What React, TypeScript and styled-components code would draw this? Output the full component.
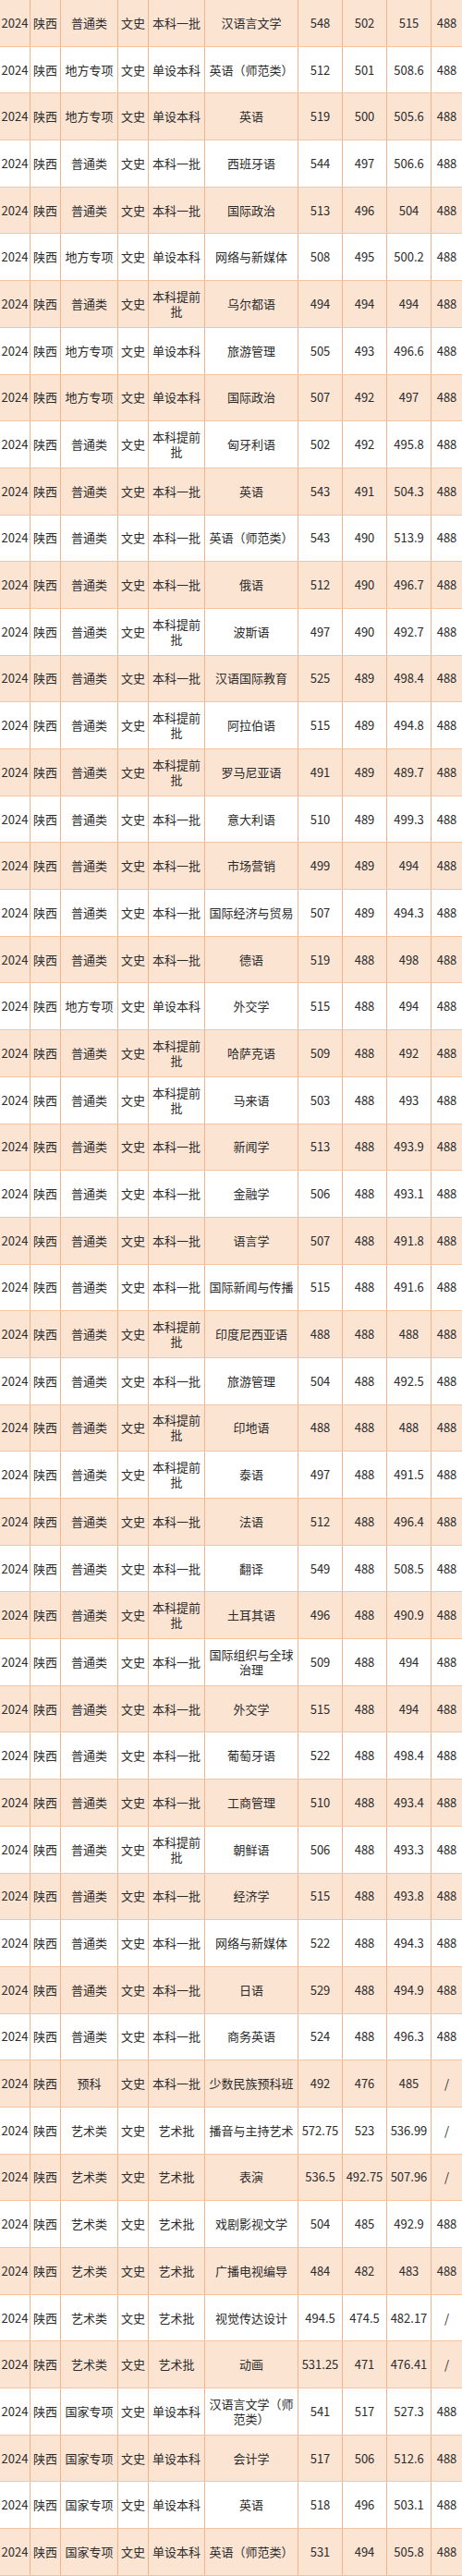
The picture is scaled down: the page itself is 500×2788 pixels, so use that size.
import React from 'react';
import styled, { createGlobalStyle } from 'styled-components';

const GlobalStyle = createGlobalStyle`
    html, body {
        margin: 0;
        padding: 0;
        background: #ffffff;
    }
    * {
        box-sizing: border-box;
    }
`;

const columns = '33px 33px 62px 33px 61px 101px 48px 48px 48px 33px';

const Table = styled.div`
    display: flex;
    flex-direction: column;
    width: 500px;
    height: 2788px;
    font-family: "Noto Sans CJK SC", "Noto Sans", sans-serif;
    font-size: 13px;
    color: #2b2b2b;
`;

const Row = styled.div<{ $shaded: boolean }>`
    flex: 1;
    display: grid;
    grid-template-columns: ${columns};
    background-color: ${(p) => (p.$shaded ? '#fce4d3' : '#ffffff')};
    border-bottom: 1px solid #f2c4a4;
`;

const Cell = styled.div`
    display: flex;
    align-items: center;
    justify-content: center;
    text-align: center;
    line-height: 16px;
    padding: 0 3px;
    border-right: 1px solid #efb48e;
    white-space: normal;
    word-break: break-all;
    &:last-child {
        border-right: none;
    }
`;

const TightCell = styled(Cell)`
    padding: 0 1px;
    white-space: nowrap;
`;

type Entry = [string, string, string, string, string, string, string];

// type, batch, major, max, min, avg, control line
const rows: Entry[] = [
    ['普通类', '本科一批', '汉语言文学', '548', '502', '515', '488'],
    ['地方专项', '单设本科', '英语（师范类）', '512', '501', '508.6', '488'],
    ['地方专项', '单设本科', '英语', '519', '500', '505.6', '488'],
    ['普通类', '本科一批', '西班牙语', '544', '497', '506.6', '488'],
    ['普通类', '本科一批', '国际政治', '513', '496', '504', '488'],
    ['地方专项', '单设本科', '网络与新媒体', '508', '495', '500.2', '488'],
    ['普通类', '本科提前批', '乌尔都语', '494', '494', '494', '488'],
    ['地方专项', '单设本科', '旅游管理', '505', '493', '496.6', '488'],
    ['地方专项', '单设本科', '国际政治', '507', '492', '497', '488'],
    ['普通类', '本科提前批', '匈牙利语', '502', '492', '495.8', '488'],
    ['普通类', '本科一批', '英语', '543', '491', '504.3', '488'],
    ['普通类', '本科一批', '英语（师范类）', '543', '490', '513.9', '488'],
    ['普通类', '本科一批', '俄语', '512', '490', '496.7', '488'],
    ['普通类', '本科提前批', '波斯语', '497', '490', '492.7', '488'],
    ['普通类', '本科一批', '汉语国际教育', '525', '489', '498.4', '488'],
    ['普通类', '本科提前批', '阿拉伯语', '515', '489', '494.8', '488'],
    ['普通类', '本科提前批', '罗马尼亚语', '491', '489', '489.7', '488'],
    ['普通类', '本科一批', '意大利语', '510', '489', '499.3', '488'],
    ['普通类', '本科一批', '市场营销', '499', '489', '494', '488'],
    ['普通类', '本科一批', '国际经济与贸易', '507', '489', '494.3', '488'],
    ['普通类', '本科一批', '德语', '519', '488', '498', '488'],
    ['地方专项', '单设本科', '外交学', '515', '488', '494', '488'],
    ['普通类', '本科提前批', '哈萨克语', '509', '488', '492', '488'],
    ['普通类', '本科提前批', '马来语', '503', '488', '493', '488'],
    ['普通类', '本科一批', '新闻学', '513', '488', '493.9', '488'],
    ['普通类', '本科一批', '金融学', '506', '488', '493.1', '488'],
    ['普通类', '本科一批', '语言学', '507', '488', '491.8', '488'],
    ['普通类', '本科一批', '国际新闻与传播', '515', '488', '491.6', '488'],
    ['普通类', '本科提前批', '印度尼西亚语', '488', '488', '488', '488'],
    ['普通类', '本科一批', '旅游管理', '504', '488', '492.5', '488'],
    ['普通类', '本科提前批', '印地语', '488', '488', '488', '488'],
    ['普通类', '本科提前批', '泰语', '497', '488', '491.5', '488'],
    ['普通类', '本科一批', '法语', '512', '488', '496.4', '488'],
    ['普通类', '本科一批', '翻译', '549', '488', '508.5', '488'],
    ['普通类', '本科提前批', '土耳其语', '496', '488', '490.9', '488'],
    ['普通类', '本科一批', '国际组织与全球治理', '509', '488', '494', '488'],
    ['普通类', '本科一批', '外交学', '515', '488', '494', '488'],
    ['普通类', '本科一批', '葡萄牙语', '522', '488', '498.4', '488'],
    ['普通类', '本科一批', '工商管理', '510', '488', '493.4', '488'],
    ['普通类', '本科提前批', '朝鲜语', '506', '488', '493.3', '488'],
    ['普通类', '本科一批', '经济学', '515', '488', '493.8', '488'],
    ['普通类', '本科一批', '网络与新媒体', '522', '488', '494.3', '488'],
    ['普通类', '本科一批', '日语', '529', '488', '494.9', '488'],
    ['普通类', '本科一批', '商务英语', '524', '488', '496.3', '488'],
    ['预科', '本科一批', '少数民族预科班', '492', '476', '485', '/'],
    ['艺术类', '艺术批', '播音与主持艺术', '572.75', '523', '536.99', '/'],
    ['艺术类', '艺术批', '表演', '536.5', '492.75', '507.96', '/'],
    ['艺术类', '艺术批', '戏剧影视文学', '504', '485', '492.9', '488'],
    ['艺术类', '艺术批', '广播电视编导', '484', '482', '483', '488'],
    ['艺术类', '艺术批', '视觉传达设计', '494.5', '474.5', '482.17', '/'],
    ['艺术类', '艺术批', '动画', '531.25', '471', '476.41', '/'],
    ['国家专项', '单设本科', '汉语言文学（师范类）', '541', '517', '527.3', '488'],
    ['国家专项', '单设本科', '会计学', '517', '506', '512.6', '488'],
    ['国家专项', '单设本科', '英语', '518', '496', '503.1', '488'],
    ['国家专项', '单设本科', '英语（师范类）', '531', '494', '505.8', '488'],
];

const App = () => {
    return (
        <>
            <GlobalStyle />
            <Table>
                {rows.map((r, i) => (
                    <Row key={i} $shaded={i % 2 === 0}>
                        <TightCell>2024</TightCell>
                        <TightCell>陕西</TightCell>
                        <TightCell>{r[0]}</TightCell>
                        <TightCell>文史</TightCell>
                        <Cell>{r[1]}</Cell>
                        <Cell>{r[2]}</Cell>
                        <TightCell>{r[3]}</TightCell>
                        <TightCell>{r[4]}</TightCell>
                        <TightCell>{r[5]}</TightCell>
                        <TightCell>{r[6]}</TightCell>
                    </Row>
                ))}
            </Table>
        </>
    );
};

export default App;
